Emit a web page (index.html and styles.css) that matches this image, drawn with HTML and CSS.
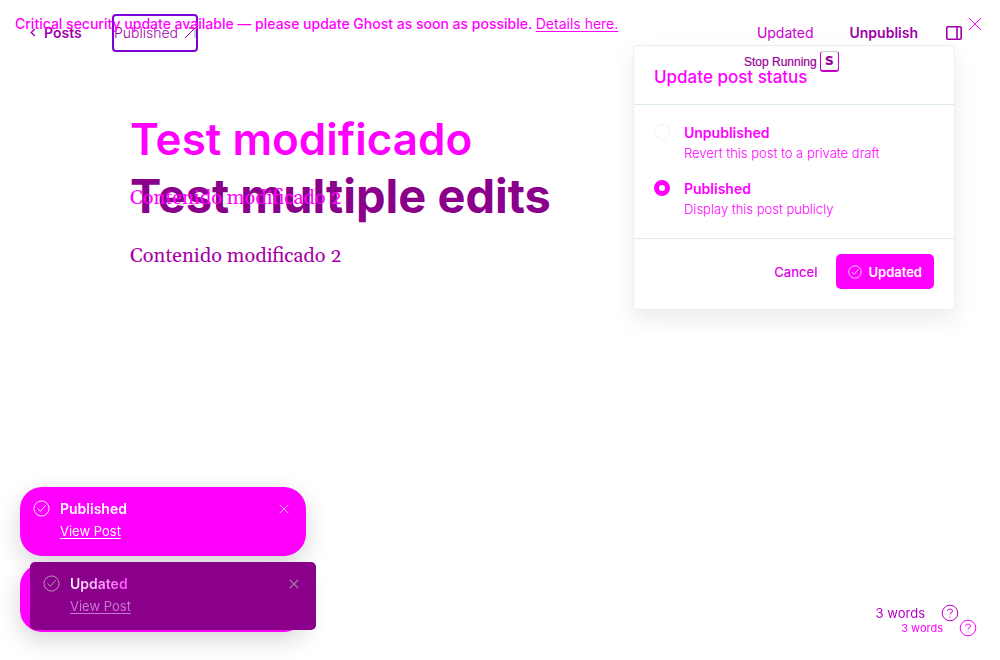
FILE: index.html
```html
<!DOCTYPE html>
<html lang="en">
<head>
<meta charset="utf-8">
<title>Post editor</title>
<link rel="stylesheet" href="styles.css">
</head>
<body>
<svg class="sprite" aria-hidden="true">
  <symbol id="check" viewBox="0 0 18 18"><circle cx="9" cy="9" r="8"/><path d="M5 9l2.800 3 5.700-6.500"/></symbol>
  <symbol id="close" viewBox="0 0 14 14"><path d="M1 1l12 12M13 1L1 13"/></symbol>
  <symbol id="help" viewBox="0 0 18 18"><circle cx="9" cy="9" r="7.800"/><path d="M6.500 7q.2-2 2.500-2t2.500 2q0 1.300-1.500 2T9 10.500M9 12.500v1"/></symbol>
</svg>

<header class="toolbar">
  <a class="back" href="#"><svg class="chevron" viewBox="0 0 6 10"><path d="M5 1L1 5l4 4"/></svg>Posts</a>
  <a class="state" href="#">Published<svg class="arrow" viewBox="0 0 12 12"><path class="ghost" d="M4 1h7v10"/><path d="M1 11L11 1M5 1h5"/></svg></a>
  <div class="actions">
    <button class="update">Updated</button>
    <button class="unpublish">Unpublish</button>
    <button class="side" aria-label="Settings"><svg viewBox="0 0 16 14"><rect x=".8" y=".8" width="14.400" height="12.400" rx="1"/><path d="M11 1v12"/></svg></button>
  </div>
</header>

<aside class="alert">
  <p>Critical security update available — please update Ghost as soon as possible. <a href="#">Details here.</a></p>
  <button aria-label="Dismiss"><svg class="x"><use href="#close"/></svg></button>
</aside>

<main class="editor">
  <h1>Test modificado</h1>
  <div class="revision">
    <p class="previous">Contenido modificado 2</p>
    <h1 class="current">Test multiple edits</h1>
  </div>
  <p class="body">Contenido modificado 2</p>
</main>

<form class="popover">
  <div class="running">Stop Running <kbd>S</kbd></div>
  <h2>Update post status</h2>
  <div class="options">
    <div class="option">
      <input type="radio" name="status" id="draft">
      <label for="draft"><strong>Unpublished</strong><span>Revert this post to a private draft</span></label>
    </div>
    <div class="option">
      <input type="radio" name="status" id="public" checked>
      <label for="public"><strong>Published</strong><span>Display this post publicly</span></label>
    </div>
  </div>
  <div class="buttons">
    <button type="button" class="cancel">Cancel</button>
    <button type="button" class="primary"><svg><use href="#check"/></svg>Updated</button>
  </div>
</form>

<section class="toasts">
  <article class="toast">
    <svg class="tick"><use href="#check"/></svg>
    <div class="message"><strong>Published</strong><a href="#">View Post</a></div>
    <button aria-label="Close"><svg class="x"><use href="#close"/></svg></button>
  </article>
  <div class="stack">
    <div class="under"></div>
    <article class="toast dark">
      <svg class="tick"><use href="#check"/></svg>
      <div class="message"><strong>Updated</strong><a href="#">View Post</a></div>
      <button aria-label="Close"><svg class="x"><use href="#close"/></svg></button>
    </article>
  </div>
</section>

<footer class="counts">
  <div class="count">3 words<svg><use href="#help"/></svg></div>
  <div class="count small">3 words<svg><use href="#help"/></svg></div>
</footer>
</body>
</html>
```
FILE: styles.css
```css
* { box-sizing: border-box; }
body { margin: 0; min-height: 100vh; background: #fff; color: #f0f; font: 14px/20px Inter, sans-serif; }
h1, h2, p { margin: 0; }
a { color: inherit; }
button { padding: 0; border: 0; background: none; color: inherit; font: inherit; cursor: pointer; }
svg { display: block; fill: none; stroke: currentColor; }
.sprite { position: absolute; width: 0; height: 0; }

.toolbar { display: flex; align-items: center; height: 65px; padding: 0 38px 0 30px; color: #a000a8; }
.toolbar a { text-decoration: none; }
.back { display: flex; align-items: center; gap: 8px; width: 82px; font-weight: 600; }
.chevron { width: 6px; height: 9px; stroke-width: 1.5; }
.state { display: flex; align-items: center; justify-content: space-between; width: 86px; height: 38px; border: 2px solid #8000d8; border-radius: 4px; font-weight: 300; }
.arrow { flex: none; width: 12px; height: 12px; }
.arrow .ghost { stroke: #ccc; stroke-width: 2; }
.actions { display: flex; align-items: center; margin-left: auto; }
.update { margin-right: 36px; color: #c800d0; }
.unpublish { margin-right: 28px; font-weight: 600; }
.side svg { width: 16px; height: 14px; stroke-width: 1.6; }

.alert { position: absolute; top: 14px; left: 15px; right: 18px; display: flex; justify-content: space-between; font-weight: 500; }
.alert a { font-weight: 400; text-underline-offset: 2px; }
.alert .x { width: 14px; height: 14px; }

.editor { padding: 49px 130px 0; }
h1 { font-size: 44px; line-height: 50px; font-weight: 600; white-space: nowrap; }
.revision { position: relative; padding-top: 7px; }
.current { color: #8b008b; font-size: 47px; font-weight: 700; }
.previous { position: absolute; top: 20px; left: 0; }
.previous, .body { font: 20px/28px Georgia, Gelasio, "Liberation Serif", serif; font-variant-numeric: oldstyle-nums; }
.body { margin-top: 21px; color: #a600a6; }

.popover { position: absolute; top: 45px; right: 45px; width: 322px; border: 1px solid #eceef0; border-radius: 4px; background: #fff; box-shadow: 0 10px 24px #00000014; }
.running { position: absolute; top: 5px; left: 110px; display: flex; align-items: center; gap: 3px; color: #960096; font: 12px/20px "Liberation Sans", sans-serif; white-space: nowrap; -webkit-text-stroke: .2px; }
kbd { width: 19px; height: 21px; border: 1px solid #c800c8; border-top-color: #ccc; border-bottom-width: 2px; border-radius: 3px; font: 700 12px/18px "DejaVu Sans", sans-serif; text-align: center; }
h2 { padding: 19px 20px 15px; font-size: 17px; line-height: 24px; font-weight: 500; border-bottom: 1px solid #dcebf2; }
.options { display: grid; gap: 16px; padding: 18px 20px 19px; border-bottom: 1px solid #dcebf2; }
.option { display: flex; gap: 14px; }
.option input { flex: none; appearance: none; width: 16px; height: 16px; margin: 1px 0 0; border: 1px dashed #e6f0f4; border-radius: 50%; }
.option input:checked { border: 5px solid #f0f; }
.option label { display: grid; }
.option strong { font-weight: 600; }
.option span { font-size: 13px; font-weight: 300; }
.buttons { display: flex; align-items: center; justify-content: flex-end; gap: 19px; padding: 15px 20px 20px; font-size: 13px; }
.cancel { font-weight: 500; color: #e000e8; }
.primary { display: flex; align-items: center; gap: 6px; height: 35px; padding: 0 12px; border-radius: 5px; background: #f0f; color: #fff; font-weight: 600; }
.primary svg { width: 14px; height: 14px; }

.toasts { position: fixed; left: 20px; bottom: 28px; width: 296px; display: grid; gap: 6px; }
.toast { display: flex; align-items: flex-start; gap: 9px; width: 286px; height: 69px; padding: 12px 17px 0 13px; border-radius: 22px; background: #f0f; color: #fff; box-shadow: 0 8px 24px #0000002a; }
.tick { flex: none; width: 17px; height: 17px; margin: 1px 1px 0 0; }
.message { display: grid; gap: 2px; flex: 1; }
.message strong { font-weight: 600; }
.message a { font-size: 13px; text-underline-offset: 2px; }
.toast .x { width: 10px; height: 10px; margin-top: 5px; }
.stack { position: relative; height: 70px; }
.under { position: absolute; top: 2px; left: 0; width: 286px; height: 68px; border-radius: 22px; background: #f0f; box-shadow: 0 8px 24px #0000002a; }
.dark { position: relative; height: 68px; margin-left: 10px; border-radius: 5px; background: #8b008b; color: #b8a0b8; box-shadow: none; }
.dark strong { background: linear-gradient(90deg, #fff, #f0f 40%); background-clip: text; color: transparent; }
.dark a { color: #c878d0; }
.dark .x { color: #a070a0; stroke-width: 2; }

.counts { position: fixed; right: 23px; bottom: 25px; display: grid; justify-items: end; font-size: 13px; }
.count { display: flex; align-items: center; gap: 16px; height: 16px; margin-right: 18px; color: #b400c0; }
.count svg { width: 18px; height: 18px; }
.small { height: 14px; margin-right: 0; color: #f0f; font-size: 11px; }
```
